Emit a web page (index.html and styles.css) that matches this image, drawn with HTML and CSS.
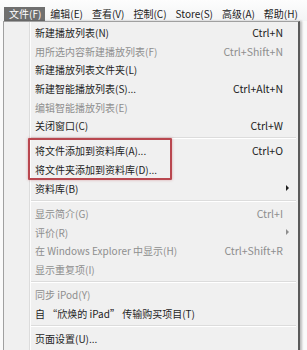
FILE: index.html
```html
<!DOCTYPE html>
<html>
<head>
<meta charset="utf-8">
<link rel="stylesheet" href="styles.css">
</head>
<body>
<div class="menubar">
  <span class="mb-item active">文件(F)</span>
  <span class="mb-item">编辑(E)</span>
  <span class="mb-item">查看(V)</span>
  <span class="mb-item">控制(C)</span>
  <span class="mb-item">Store(S)</span>
  <span class="mb-item">高级(A)</span>
  <span class="mb-item">帮助(H)</span>
</div>
<div class="menu">
  <div class="row"><span>新建播放列表(N)</span><span class="sc">Ctrl+N</span></div>
  <div class="row dis"><span>用所选内容新建播放列表(F)</span><span class="sc">Ctrl+Shift+N</span></div>
  <div class="row"><span>新建播放列表文件夹(L)</span></div>
  <div class="row"><span>新建智能播放列表(S)...</span><span class="sc">Ctrl+Alt+N</span></div>
  <div class="row dis"><span>编辑智能播放列表(E)</span></div>
  <div class="row"><span>关闭窗口(C)</span><span class="sc">Ctrl+W</span></div>
  <div class="sep"></div>
  <div class="row"><span>将文件添加到资料库(A)...</span><span class="sc">Ctrl+O</span></div>
  <div class="row"><span>将文件夹添加到资料库(D)...</span></div>
  <div class="row"><span>资料库(B)</span><span class="arrow"></span></div>
  <div class="sep"></div>
  <div class="row dis"><span>显示简介(G)</span><span class="sc">Ctrl+I</span></div>
  <div class="row dis"><span>评价(R)</span><span class="arrow"></span></div>
  <div class="row dis"><span>在 Windows Explorer 中显示(H)</span><span class="sc">Ctrl+Shift+R</span></div>
  <div class="row dis"><span>显示重复项(I)</span></div>
  <div class="sep"></div>
  <div class="row dis"><span>同步 iPod(Y)</span></div>
  <div class="row"><span>自 “欣焕的 iPad” 传输购买项目(T)</span></div>
  <div class="sep"></div>
  <div class="row"><span>页面设置(U)...</span></div>
  <div class="highlight"></div>
</div>
</body>
</html>
```
FILE: styles.css
```css
html, body {
  margin: 0;
  padding: 0;
  background: #fafafa;
  font-family: "Noto Sans CJK SC", "Noto Sans", sans-serif;
  font-size: 10px;
  color: #1e1e1e;
  overflow: hidden;
}
.menubar {
  height: 21px;
  display: flex;
  align-items: flex-end;
  padding-left: 4px;
  background: linear-gradient(#fdfdfd, #f3f4f5);
  white-space: nowrap;
  overflow: hidden;
}
.mb-item {
  height: 14px;
  line-height: 14px;
  padding: 0 4px 0 5px;
  color: #222;
}
.mb-item.active {
  background: #6f6f6f;
  color: #fff;
}
.menu {
  position: relative;
  margin-left: 3px;
  width: 297px;
  height: 340px;
  border: 1px solid #a0a0a0;
  border-right: 2px solid #5a5a5a;
  padding-top: 1px;
  box-sizing: border-box;
  background: linear-gradient(to right, #f0f0f0 25px, #dcdcdc 25px, #dcdcdc 26px, #fdfdfd 26px, #fdfdfd 27px, #f0f0f0 27px);
  box-shadow: 2px 0 2px rgba(0,0,0,0.25);
}
.row {
  height: 18.7px;
  display: flex;
  align-items: center;
  justify-content: space-between;
  padding: 0 15px 0 31px;
  white-space: nowrap;
}
.row.dis {
  color: #8e8e8e;
}
.sc {
  text-align: right;
  font-size: 10.5px;
}
.arrow {
  width: 0;
  height: 0;
  border-top: 3px solid transparent;
  border-bottom: 3px solid transparent;
  border-left: 3px solid #1e1e1e;
  margin-right: -6px;
}
.dis .arrow {
  border-left-color: #8e8e8e;
}
.sep {
  height: 6.5px;
  display: flex;
  align-items: center;
  padding: 0 2px 0 27px;
}
.sep::before {
  content: "";
  flex: 1;
  height: 0;
  border-top: 1px solid #dcdcdc;
  border-bottom: 1px solid #ffffff;
}
.highlight {
  position: absolute;
  left: 24px;
  top: 116px;
  width: 144px;
  height: 42px;
  box-sizing: border-box;
  border: 2px solid #b9474f;
  border-radius: 1px;
  box-shadow: 0 0 3px rgba(185, 71, 79, 0.45);
}
```
